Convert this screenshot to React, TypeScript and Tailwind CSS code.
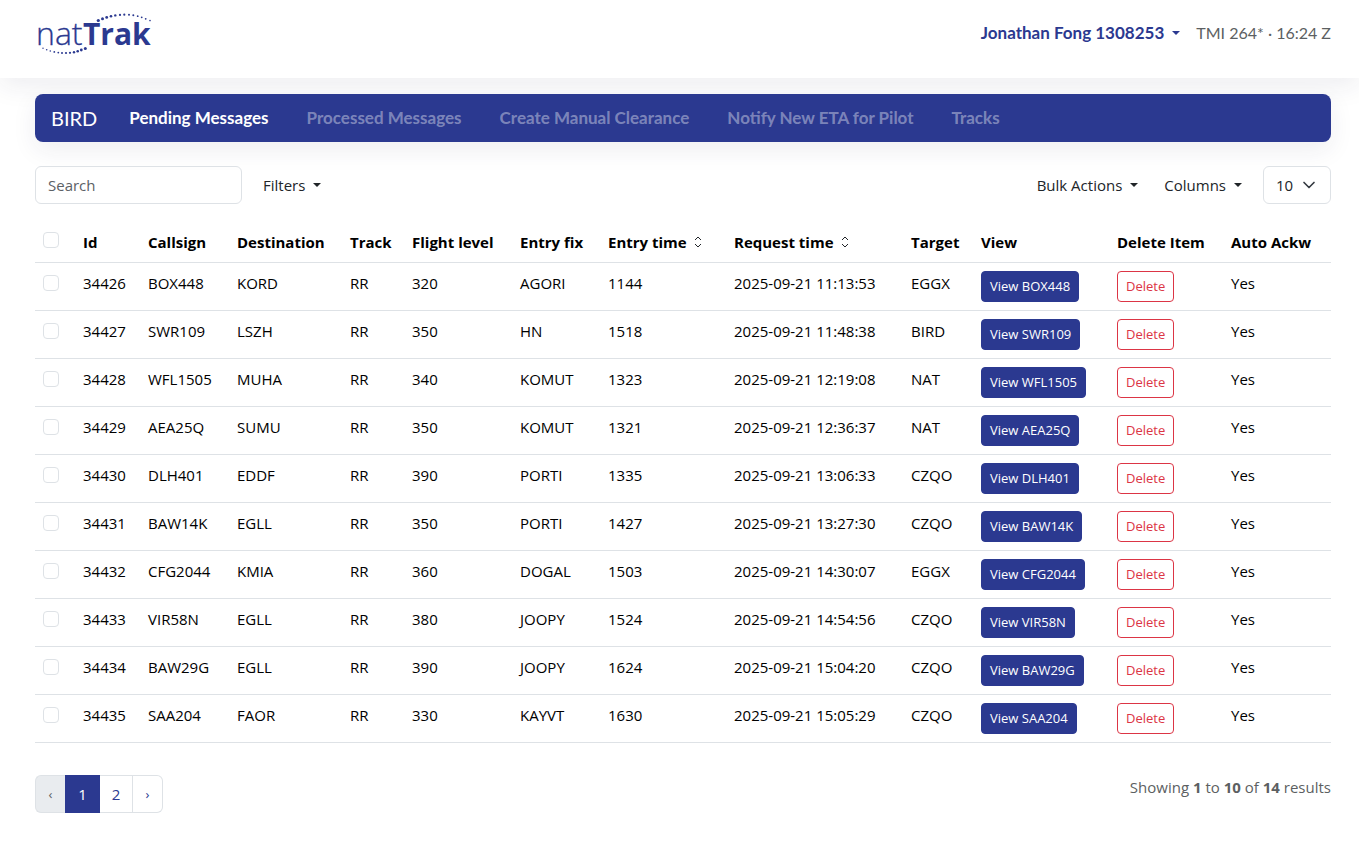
import { ChevronDown } from "lucide-react";

const navLinks = [
  "Pending Messages",
  "Processed Messages",
  "Create Manual Clearance",
  "Notify New ETA for Pilot",
  "Tracks",
];

const columns = [
  { label: "Id", width: "w-[65px]" },
  { label: "Callsign", width: "w-[89px]" },
  { label: "Destination", width: "w-[113px]" },
  { label: "Track", width: "w-[62px]" },
  { label: "Flight level", width: "w-[108px]" },
  { label: "Entry fix", width: "w-[88px]" },
  { label: "Entry time", width: "w-[126px]", sortable: true },
  { label: "Request time", width: "w-[177px]", sortable: true },
  { label: "Target", width: "w-[70px]" },
  { label: "View", width: "w-[136px]" },
  { label: "Delete Item", width: "w-[114px]" },
  { label: "Auto Ackw", width: "w-[108px]" },
];

// id, callsign, destination, track, flight level, entry fix, entry time, request time, target
const messages = [
  ["34426", "BOX448", "KORD", "RR", "320", "AGORI", "1144", "2025-09-21 11:13:53", "EGGX"],
  ["34427", "SWR109", "LSZH", "RR", "350", "HN", "1518", "2025-09-21 11:48:38", "BIRD"],
  ["34428", "WFL1505", "MUHA", "RR", "340", "KOMUT", "1323", "2025-09-21 12:19:08", "NAT"],
  ["34429", "AEA25Q", "SUMU", "RR", "350", "KOMUT", "1321", "2025-09-21 12:36:37", "NAT"],
  ["34430", "DLH401", "EDDF", "RR", "390", "PORTI", "1335", "2025-09-21 13:06:33", "CZQO"],
  ["34431", "BAW14K", "EGLL", "RR", "350", "PORTI", "1427", "2025-09-21 13:27:30", "CZQO"],
  ["34432", "CFG2044", "KMIA", "RR", "360", "DOGAL", "1503", "2025-09-21 14:30:07", "EGGX"],
  ["34433", "VIR58N", "EGLL", "RR", "380", "JOOPY", "1524", "2025-09-21 14:54:56", "CZQO"],
  ["34434", "BAW29G", "EGLL", "RR", "390", "JOOPY", "1624", "2025-09-21 15:04:20", "CZQO"],
  ["34435", "SAA204", "FAOR", "RR", "330", "KAYVT", "1630", "2025-09-21 15:05:29", "CZQO"],
];

const topDots = [
  [62.3, 7.5, 1.6], [66.5, 5.8, 1.5], [70.7, 4.4, 1.4], [75, 3.2, 1.3], [79.3, 2.4, 1.2],
  [84, 1.9, 1.1], [88.3, 1.7, 1.1], [93, 1.8, 1], [97.3, 2.3, 1], [101.7, 3.2, 0.9],
  [105.7, 4.3, 0.9], [109.7, 5.8, 0.9], [114, 7.6, 0.8],
];

const bottomDots = [
  [7, 35.2, 0.7], [10.7, 36.7, 0.8], [14.3, 38, 0.8], [18.3, 38.9, 0.9], [22.3, 39.6, 0.9],
  [26, 40, 1], [30, 40, 1.1], [34, 39.8, 1.1], [38, 39.2, 1.2], [41.7, 38.2, 1.3],
  [45.3, 37, 1.4], [49.3, 35.4, 1.5],
];

function Logo() {
  return (
    <svg
      width="118"
      height="42"
      viewBox="0 0 118 42"
      fill="#2b3990"
      className="overflow-visible font-['Open_Sans',sans-serif]"
      role="img"
      aria-label="natTrak"
    >
      {[...topDots, ...bottomDots].map(([x, y, r]) => (
        <circle key={x} cx={x} cy={y} r={r} />
      ))}
      <text x="0" y="32" fontSize="32" fontWeight="300" stroke="#2b3990" strokeWidth="0.3">nat</text>
      <text x="47" y="32" fontSize="30" fontWeight="700">Trak</text>
    </svg>
  );
}

function Caret() {
  return <span className="inline-block border-x-4 border-t-4 border-x-transparent border-t-current" />;
}

function SortIcon() {
  return (
    <svg width="8" height="12" viewBox="0 0 8 12" fill="none" stroke="#212529" strokeWidth="1">
      <path d="M1 4 4 1l3 3M1 8l3 3 3-3" />
    </svg>
  );
}

function Checkbox({ label }: { label: string }) {
  return (
    <input
      type="checkbox"
      aria-label={label}
      className="block size-4 appearance-none rounded border border-[#dee2e6] bg-white checked:bg-[#2b3990]"
    />
  );
}

export default function App() {
  return (
    <div className="min-h-screen bg-white font-['Open_Sans',sans-serif] text-[15px] leading-6 text-[#212529]">
      <header className="flex h-[78px] items-start justify-between pt-3 pr-7 pl-9 font-['Lato',sans-serif] text-base shadow-[0_8px_24px_rgba(33,40,80,0.08)]">
        <a href="#" className="mt-px">
          <Logo />
        </a>
        <div className="flex items-center gap-4 pt-2">
          <button className="flex items-center gap-2 text-[17px] font-bold text-[#2b3990]">
            Jonathan Fong 1308253
            <Caret />
          </button>
          <span className="text-[#5c5f62]">TMI 264* · 16:24 Z</span>
        </div>
      </header>

      <main className="pt-4 pr-7 pb-7 pl-[35px]">
        <nav className="flex h-12 items-center rounded-lg bg-[#2b3990] px-4 font-['Lato',sans-serif] shadow-[0_8px_24px_rgba(33,40,80,0.08)]">
          <a href="#" className="mr-8 text-xl text-white">BIRD</a>
          <div className="flex gap-[38px] text-[17px] font-bold">
            {navLinks.map((link, i) => (
              <a key={link} href="#" className={i === 0 ? "text-white" : "text-white/40"}>
                {link}
              </a>
            ))}
          </div>
        </nav>

        <div className="mt-6 flex items-center justify-between">
          <div className="flex items-center">
            <input
              type="text"
              placeholder="Search"
              aria-label="Search"
              className="h-[38px] w-[207px] rounded-md border border-[#dee2e6] px-3 placeholder:text-[#5c6166]"
            />
            <button className="ml-[9px] flex items-center gap-2 px-3">
              Filters
              <Caret />
            </button>
          </div>
          <div className="flex items-center">
            <button className="mr-0.5 flex items-center gap-2 px-3">
              Bulk Actions
              <Caret />
            </button>
            <button className="mr-[9px] flex items-center gap-2 px-3">
              Columns
              <Caret />
            </button>
            <div className="relative">
              <select
                aria-label="Results per page"
                className="block h-[38px] w-[68px] appearance-none rounded-md border border-[#dee2e6] bg-white px-3"
              >
                <option>10</option>
                <option>25</option>
                <option>50</option>
              </select>
              <ChevronDown className="pointer-events-none absolute top-[9px] right-3 size-5 text-[#343a40]" />
            </div>
          </div>
        </div>

        <table className="mt-[18px] w-full table-fixed text-left text-black">
          <thead>
            <tr className="border-b border-[#dee2e6]">
              <th className="w-10 px-2 pt-[10px] align-top">
                <Checkbox label="Select all" />
              </th>
              {columns.map(({ label, width, sortable }) => (
                <th key={label} className={`${width} p-2 font-bold whitespace-nowrap`}>
                  {sortable ? (
                    <button className="flex items-center gap-[7px]">
                      {label}
                      <SortIcon />
                    </button>
                  ) : (
                    label
                  )}
                </th>
              ))}
            </tr>
          </thead>
          <tbody>
            {messages.map((row) => (
              <tr key={row[0]} className="border-b border-[#dee2e6] align-top">
                <td className="px-2 py-3">
                  <Checkbox label={`Select ${row[0]}`} />
                </td>
                {row.map((value, i) => (
                  <td key={i} className="p-2 whitespace-nowrap">{value}</td>
                ))}
                <td className="p-2">
                  <button className="block rounded border border-[#2b3990] bg-[#2b3990] px-2 py-1 text-[13px] leading-[21px] whitespace-nowrap text-white">
                    View {row[1]}
                  </button>
                </td>
                <td className="p-2">
                  <button className="block rounded border border-[#dc3545] px-2 py-1 text-[13px] leading-[21px] text-[#dc3545]">
                    Delete
                  </button>
                </td>
                <td className="p-2">Yes</td>
              </tr>
            ))}
          </tbody>
        </table>

        <div className="mt-8 flex items-start justify-between">
          <nav aria-label="Pagination" className="flex h-[38px] text-[#2b3990]">
            <button disabled className="w-[30px] rounded-l-md border border-r-0 border-[#dee2e6] bg-[#e9ecef] text-[13px] text-[#5c6166]">
              ‹
            </button>
            <button className="w-[35px] bg-[#2b3990] text-white">1</button>
            <button className="w-[33px] border border-l-0 border-[#dee2e6]">2</button>
            <button className="w-[30px] rounded-r-md border border-l-0 border-[#dee2e6] text-[13px]">›</button>
          </nav>
          <p className="text-[#5c5f62]">
            Showing <b>1</b> to <b>10</b> of <b>14</b> results
          </p>
        </div>
      </main>
    </div>
  );
}
